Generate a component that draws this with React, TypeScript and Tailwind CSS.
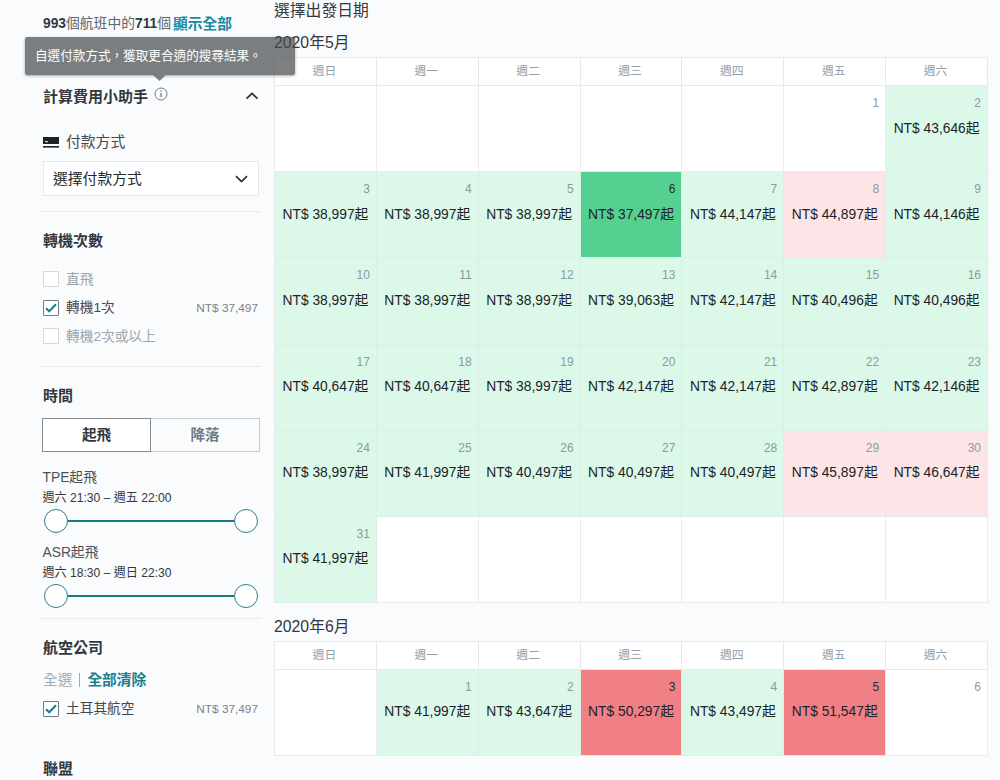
import clsx from "clsx";

type Tone = "none" | "low" | "best" | "high" | "peak";

interface IDay {
  day?: number;
  price?: string;
  tone: Tone;
}

const weekdays = ["週日", "週一", "週二", "週三", "週四", "週五", "週六"];

const tones: Record<Tone, string> = {
  none: "bg-white",
  low: "bg-[#dcf8e9]",
  best: "bg-[#55d091]",
  high: "bg-[#fde4e7]",
  peak: "bg-[#f07f86]",
};

const mayPrices = [
  "", "43,646",
  "38,997", "38,997", "38,997", "37,497", "44,147", "44,897", "44,146",
  "38,997", "38,997", "38,997", "39,063", "42,147", "40,496", "40,496",
  "40,647", "40,647", "38,997", "42,147", "42,147", "42,897", "42,146",
  "38,997", "41,997", "40,497", "40,497", "40,497", "45,897", "46,647",
  "41,997",
];

const junePrices = ["41,997", "43,647", "50,297", "43,497", "51,547", ""];

function toneOf(price: string): Tone {
  if (!price) return "none";
  const value = Number(price.replace(",", ""));
  if (value >= 50000) return "peak";
  if (value > 44500) return "high";
  if (value < 38000) return "best";
  return "low";
}

function buildMonth(offset: number, prices: string[]): IDay[] {
  const days: IDay[] = Array.from({length: offset}, () => ({tone: "none"}));
  prices.forEach((price, i) => days.push({day: i + 1, price, tone: toneOf(price)}));
  while (days.length % 7) days.push({tone: "none"});
  return days;
}

function DayCell({item}: { item: IDay }) {
  const strong = item.tone === "best" || item.tone === "peak";
  return (
      <div className={clsx("h-[86.2px] border-r border-b pt-[8px]", tones[item.tone],
          item.tone === "none" ? "border-[#e8ecef]" : "border-[#dceee6]")}>
        <div className={clsx("h-[18px] pr-[6px] text-right text-[12px] leading-[18px]",
            strong ? "text-[#20302b]" : "text-[#8b9aa1]")}>
          {item.day}
        </div>
        {item.price && (
            <div className="mt-[7.5px] pl-[7.5px] text-[13.8px] leading-[18px] whitespace-nowrap text-[#1c2326]">
              NT$ {item.price}起
            </div>
        )}
      </div>
  );
}

function Month({days}: { days: IDay[] }) {
  return (
      <div className="grid w-[714px] grid-cols-7 border-t border-l border-[#e6eaed]">
        {weekdays.map(w => (
            <div key={w}
                 className={"flex h-[28px] items-center justify-center border-r border-b "
                     + "border-[#e6eaed] bg-white pr-[2px] text-[11.8px] text-[#93a0a9]"}>
              {w}
            </div>
        ))}
        {days.map((d, i) => <DayCell key={i} item={d}/>)}
      </div>
  );
}

function Divider({className}: { className: string }) {
  return <div className={clsx("h-px w-[221px] bg-[#e8ecef]", className)}/>;
}

function Heading({text, className}: { text: string, className: string }) {
  return (
      <h3 className={clsx("flex h-[22px] items-center pt-[2px] pl-[3px] text-[15px] font-bold text-[#32383d]",
          className)}>
        {text}
      </h3>
  );
}

function CheckRow({label, checked, price}: { label: string, checked?: boolean, price?: string }) {
  return (
      <div className="flex h-[28.5px] items-center pr-[3px] pl-[3px]">
        <span className={clsx("flex size-[16px] items-center justify-center border bg-white",
            checked ? "rounded-[1px] border-[#6f7c84]" : "border-[#d5dade]")}>
          {checked && (
              <svg width="12" height="10" viewBox="0 0 12 10" fill="none" stroke="#138294" strokeWidth="2">
                <path d="M1 5.2 4.2 8.3 11 1.2"/>
              </svg>
          )}
        </span>
        <span className={clsx("ml-[7px] pt-[2px] text-[13.7px]", checked ? "text-[#43494e]" : "text-[#98a5ae]")}>
          {label}
        </span>
        {price && <span className="ml-auto pt-[2px] text-[11.8px] text-[#77858e]">NT$ {price}</span>}
      </div>
  );
}

function TimeRange({place, range}: { place: string, range: string }) {
  return (
      <div className="pl-[2.5px]">
        <div className="flex h-[20px] items-center pt-[2px] text-[13.8px] text-[#4c5358]">{place}</div>
        <div className="flex h-[20px] items-center pt-[2px] text-[12.1px] text-[#32383d]">{range}</div>
        <div className="mt-[1.5px] ml-[1px] flex h-[24px] w-[214px] items-center">
          <span className="size-[24px] rounded-full border border-[#2a7f88] bg-white"/>
          <span className="h-[2px] grow bg-[#1c7a83]"/>
          <span className="size-[24px] rounded-full border border-[#2a7f88] bg-white"/>
        </div>
      </div>
  );
}

function Tooltip() {
  return (
      <div className="absolute top-[37px] left-[24.5px] z-10">
        <div className={"flex h-[38px] w-[270px] items-center rounded-[2px] bg-[#46484a]/70 pl-[10.5px] "
            + "text-[12.6px] whitespace-nowrap text-white shadow-[0_1px_3px_rgba(0,0,0,0.35)]"}>
          自選付款方式，獲取更合適的搜尋結果。
        </div>
        <svg className="ml-[128px] block" width="13" height="6" viewBox="0 0 13 6">
          <path d="M0 0h13L6.5 6z" fill="#7b7e80"/>
        </svg>
      </div>
  );
}

function Sidebar() {
  return (
      <aside className="w-[221px] shrink-0 pt-[12px]">
        <div className={"flex h-[22px] items-center pt-[2px] pl-[3px] text-[13.8px] "
            + "whitespace-nowrap text-[#5f676d]"}>
          <b className="text-[#32383d]">993</b>個航班中的<b className="text-[#32383d]">711</b>個
          <a className="ml-[2px] text-[14.7px] font-bold text-[#1a88a0]">顯示全部</a>
        </div>

        <div className="mt-[51px] flex h-[22px] items-center pr-[2px] pl-[3px]">
          <h3 className="pt-[2px] text-[15px] font-bold text-[#32383d]">計算費用小助手</h3>
          <svg className="mb-[5px] ml-[6px]" width="14" height="14" viewBox="0 0 14 14" fill="none" stroke="#777f85">
            <circle cx="7" cy="7" r="6"/>
            <path d="M7 6v4.3M7 3.4v1.3" strokeWidth="1.3"/>
          </svg>
          <svg className="ml-auto" width="14" height="8" viewBox="0 0 14 8" fill="none" stroke="#292f33" strokeWidth="1.7">
            <path d="M1.5 6.7 7 1.5l5.5 5.2"/>
          </svg>
        </div>

        <div className="mt-[24px] flex h-[22px] items-center pl-[3px] text-[14.8px] text-[#43494e]">
          <svg className="mt-px mr-[7px]" width="16" height="11" viewBox="0 0 16 11" fill="#1c2226">
            <path d="M0 0h16v7H0z"/>
            <path d="M2 4.2h3v1H2z" fill="#fff"/>
            <path d="M0 9h16v1.6H0z"/>
          </svg>
          <span className="pt-px">付款方式</span>
        </div>
        <div className={"mt-[8px] ml-[3px] flex h-[35px] w-[216px] items-center justify-between border "
            + "border-[#e4e8eb] bg-white pr-[10px] pl-[9px] text-[14.8px] text-[#25292c]"}>
          <span className="pt-[2px]">選擇付款方式</span>
          <svg width="13" height="8" viewBox="0 0 13 8" fill="none" stroke="#292f33" strokeWidth="1.7">
            <path d="M1 1.2l5.5 5.3L12 1.2"/>
          </svg>
        </div>
        <Divider className="mt-[15px]"/>

        <Heading text="轉機次數" className="mt-[17px]"/>
        <div className="mt-[14px]">
          <CheckRow label="直飛"/>
          <CheckRow label="轉機1次" checked price="37,497"/>
          <CheckRow label="轉機2次或以上"/>
        </div>
        <Divider className="mt-[15.5px]"/>

        <Heading text="時間" className="mt-[17.5px]"/>
        <div className="mt-[11.5px] ml-[2px] flex h-[34px] w-[218px] text-[14.6px] font-bold">
          <div className={"flex w-[109px] items-center justify-center border border-[#858c91] "
              + "bg-white pt-[2px] text-[#32383d]"}>
            起飛
          </div>
          <div className={"flex w-[109px] items-center justify-center border border-l-0 "
              + "border-[#c6cbcf] pt-[2px] text-[#6b7a84]"}>
            降落
          </div>
        </div>
        <div className="mt-[15.5px] flex flex-col gap-[9px]">
          <TimeRange place="TPE起飛" range="週六 21:30 – 週五 22:00"/>
          <TimeRange place="ASR起飛" range="週六 18:30 – 週日 22:30"/>
        </div>
        <Divider className="mt-[10px]"/>

        <Heading text="航空公司" className="mt-[18px]"/>
        <div className="mt-[10px] flex h-[22px] items-center pl-[3px] text-[14.7px]">
          <span className="pt-[2px] text-[#a0acb5]">全選</span>
          <span className="mx-[7px] h-[14px] w-px bg-[#a0acb5]"/>
          <a className="pt-[2px] font-bold text-[#1a7f92]">全部清除</a>
        </div>
        <div className="mt-[4px]">
          <CheckRow label="土耳其航空" checked price="37,497"/>
        </div>
        <Heading text="聯盟" className="mt-[34.5px]"/>
      </aside>
  );
}

export default function App() {
  return (
      <div className={"relative flex h-[780px] w-[1000px] gap-[13px] overflow-hidden bg-[#f9fbfd] pl-[40px] "
          + "font-['Liberation_Sans','Noto_Sans_CJK_TC',sans-serif]"}>
        <Sidebar/>
        <main className="text-[15.8px] text-[#32383d]">
          <h2 className="flex h-[21px] items-center">選擇出發日期</h2>
          <h3 className="mt-[11px] mb-[5px] flex h-[20px] items-center pt-px">2020年5月</h3>
          <Month days={buildMonth(5, mayPrices)}/>
          <h3 className="mt-[12.8px] mb-[5px] flex h-[20px] items-center pt-px">2020年6月</h3>
          <Month days={buildMonth(1, junePrices)}/>
        </main>
        <Tooltip/>
      </div>
  );
}
